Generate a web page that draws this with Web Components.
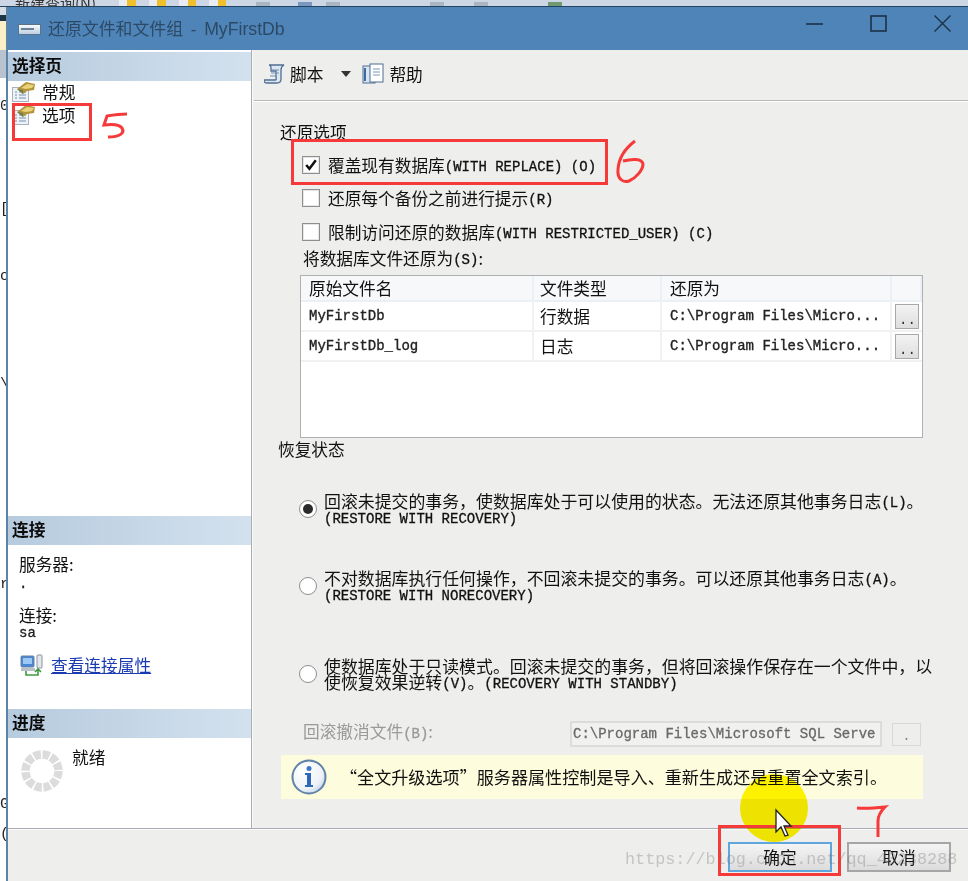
<!DOCTYPE html>
<html lang="zh">
<head>
<meta charset="utf-8">
<title>还原文件和文件组</title>
<style>
  html, body { margin: 0; padding: 0; background: #eeeeec; }
  body { font: 16.7px/20px "Noto Sans CJK SC", "Liberation Sans", sans-serif; color: #111; overflow: hidden; }
</style>
</head>
<body>

<restore-screen>
  <desk-top slot="top"></desk-top>
  <desk-edge slot="edge"></desk-edge>

  <title-bar slot="title">还原文件和文件组 - <span style="font-size:17.7px">MyFirstDb</span></title-bar>

  <side-pane slot="side">
    <side-section heading="选择页" size="464">
      <page-link>常规</page-link>
      <page-link>选项</page-link>
    </side-section>
    <side-section heading="连接" size="193">
      <conn-info></conn-info>
    </side-section>
    <side-section heading="进度" size="118">
      <progress-info></progress-info>
    </side-section>
  </side-pane>

  <tool-strip slot="tools"></tool-strip>

  <options-page slot="main">
    <form-label style="margin-top:21px">还原选项</form-label>

    <check-row checked style="margin-top:11px">覆盖现有数据库<mono-text>(WITH REPLACE) (O)</mono-text></check-row>
    <check-row style="margin-top:9px">还原每个备份之前进行提示<mono-text>(R)</mono-text></check-row>
    <check-row style="margin-top:10px">限制访问还原的数据库<mono-text>(WITH RESTRICTED_USER) (C)</mono-text></check-row>

    <form-label indent="48" style="margin-top:4px">将数据库文件还原为<mono-text>(S)</mono-text>:</form-label>
    <file-grid style="margin-top:7px"></file-grid>

    <form-label style="margin-top:1px;margin-left:-2px">恢复状态</form-label>

    <radio-row checked style="margin-top:33px">回滚未提交的事务&#xFF0C;使数据库处于可以使用的状态。无法还原其他事务日志<mono-text>(L)</mono-text>。<br><mono-text>(RESTORE WITH RECOVERY)</mono-text></radio-row>
    <radio-row style="margin-top:43px">不对数据库执行任何操作&#xFF0C;不回滚未提交的事务。可以还原其他事务日志<mono-text>(A)</mono-text>。<br><mono-text>(RESTORE WITH NORECOVERY)</mono-text></radio-row>
    <radio-row style="margin-top:54px">使数据库处于只读模式。回滚未提交的事务&#xFF0C;但将回滚操作保存在一个文件中&#xFF0C;以<br>使恢复效果逆转<mono-text>(V)</mono-text>。<mono-text>(RECOVERY WITH STANDBY)</mono-text></radio-row>

    <undo-row style="margin-top:30px"></undo-row>
    <info-bar style="margin-top:8px"><wide-quote>“</wide-quote>全文升级选项<wide-quote left>”</wide-quote>服务器属性控制是导入、重新生成还是重置全文索引。</info-bar>
  </options-page>

  <dialog-footer slot="footer">
    <dlg-button primary>确定</dlg-button>
    <dlg-button>取消</dlg-button>
  </dialog-footer>

  <mark-up slot="overlay"></mark-up>
</restore-screen>

<script>
// small helper so every component is declared the same way
function shadow(el, html) {
  el.attachShadow({ mode: 'open' });
  el.shadowRoot.innerHTML = html;
}

class MonoText extends HTMLElement {
  constructor() {
    super();
    // line-height 0 so the narrower font never pushes the two-line labels apart
    shadow(this, `<style>:host{font-family:"Liberation Mono",monospace;font-size:14px;line-height:0;vertical-align:1px;-webkit-text-stroke:.3px currentColor;}</style><slot></slot>`);
  }
}

// the dialog font sets quotes on a full em
class WideQuote extends HTMLElement {
  constructor() {
    super();
    shadow(this, `<style>:host{display:inline-block;width:1em;text-align:right;}:host([left]){text-align:left;}</style><slot></slot>`);
  }
}

class RestoreScreen extends HTMLElement {
  constructor() {
    super();
    shadow(this, `
      <style>
        :host { display: block; position: relative; width: 968px; height: 881px; overflow: hidden; }
        .lower { display: flex; height: 874px; }
        .dialog { flex: 1; display: flex; flex-direction: column; min-width: 0; border-left: 2px solid #5c83a8; background: #eeeeec; }
        .body { display: flex; height: 778px; }
        .right { flex: 1; display: flex; flex-direction: column; min-width: 0; }
      </style>
      <slot name="top"></slot>
      <div class="lower">
        <slot name="edge"></slot>
        <div class="dialog">
          <slot name="title"></slot>
          <div class="body">
            <slot name="side"></slot>
            <div class="right">
              <slot name="tools"></slot>
              <slot name="main"></slot>
            </div>
          </div>
          <slot name="footer"></slot>
        </div>
      </div>
      <slot name="overlay"></slot>`);
  }
}

// cropped bit of the SSMS toolbar behind the dialog
class DeskTop extends HTMLElement {
  constructor() {
    super();
    const yellow = x => `<i class="ico" style="margin-left:${x}px"></i>`;
    shadow(this, `
      <style>
        :host { display: block; height: 7px; overflow: hidden; background: #cdd6e4; }
        .row { display: flex; align-items: flex-end; height: 6px; border-bottom: 1px solid #23435f; }
        .txt { margin-left: 15px; color: #333; font-size: 15px; line-height: 18px; height: 6px; margin-top: -12px; display: block; transform: translateY(-6px); width: 90px; white-space: nowrap; }
        .ico { display: block; width: 17px; height: 6px; background: linear-gradient(90deg, #e9edf3 50%, #f0bf2c 50%); }
        .grey { display: block; width: 14px; height: 4px; background: #aab5c4; }
      </style>
      <div class="row">
        <span class="txt">新建查询(N)</span>
        ${yellow(14)}${yellow(13)}${yellow(13)}${yellow(13)}
        <i class="grey" style="margin-left:30px"></i>
        <i class="grey" style="margin-left:28px;background:#7b97bd"></i>
        <i class="grey" style="margin-left:14px"></i>
        <i class="grey" style="margin-left:90px"></i>
        <i class="grey" style="margin-left:30px"></i>
        <i class="grey" style="margin-left:60px;background:#6f9a6f"></i>
      </div>`);
  }
}

class DeskEdge extends HTMLElement {
  constructor() {
    super();
    const bits = [[92, '0'], [87, '['], [51, 'o'], [92, '\\'], [184, 'r'], [204, 'G'], [14, '(']];
    shadow(this, `
      <style>
        :host { display: block; width: 6px; height: 874px; overflow: hidden; flex: none;
          background: linear-gradient(#d8dde5 0 8px, #1f3347 8px 14px, #fbefc8 14px 43px, #b9c3cf 43px 71px, #fff 71px); }
        span { display: block; font: 15px/16px "Liberation Mono", monospace; color: #222; width: 6px; }
      </style>
      ${bits.map(b => `<span style="margin-top:${b[0]}px">${b[1]}</span>`).join('')}`);
  }
}

class TitleBar extends HTMLElement {
  constructor() {
    super();
    shadow(this, `
      <style>
        :host { display: flex; align-items: center; height: 43px; flex: none; background: #4f84b8;
          color: #2c4a66; font: 16.9px/20px "Liberation Sans", "Noto Sans CJK SC", sans-serif; word-spacing: 3px; }
        .icon { margin: 2px 7px 0 10px; flex: none; }
        .text { flex: 1; margin-top: 2px; white-space: nowrap; }
        svg.win { flex: none; display: block; }
        .buttons { display: flex; margin-right: 17px; margin-bottom: 11px; gap: 47px; align-items: center; }
      </style>
      <svg class="icon" width="23" height="11" viewBox="0 0 23 11">
        <defs><linearGradient id="g" x1="0" y1="0" x2="0" y2="1"><stop offset="0" stop-color="#fbfdff"/><stop offset="1" stop-color="#b9cde0"/></linearGradient></defs>
        <rect x=".5" y=".5" width="22" height="10" fill="url(#g)" stroke="#5a7389"/>
        <rect x="3" y="4" width="13" height="2" fill="#6b8196"/>
      </svg>
      <span class="text"><slot></slot></span>
      <div class="buttons">
        <svg class="win" width="17" height="17" viewBox="0 0 17 17"><path d="M0 9h17" stroke="#1b3145" stroke-width="1.6"/></svg>
        <svg class="win" width="17" height="17" viewBox="0 0 17 17"><rect x="1" y="1" width="15" height="15" fill="none" stroke="#1b3145" stroke-width="1.6"/></svg>
        <svg class="win" width="17" height="17" viewBox="0 0 17 17"><path d="M.5.5l16 16M16.500.5l-16 16" stroke="#1b3145" stroke-width="1.4"/></svg>
      </div>`);
  }
}

class SidePane extends HTMLElement {
  constructor() {
    super();
    shadow(this, `
      <style>
        :host { display: flex; flex-direction: column; flex: none; width: 243px; height: 776px;
          background: #fff; border-right: 1px solid #a9adb1; padding-top: 2px; box-shadow: 1px 0 0 #fafafa; margin-right: 2px; background-clip: padding-box; }
      </style><slot></slot>`);
  }
}

class SideSection extends HTMLElement {
  constructor() {
    super();
    shadow(this, `
      <style>
        :host { display: block; overflow: hidden; flex: none; }
        .head { height: 29px; padding-left: 4px; box-sizing: border-box;
          background: linear-gradient(90deg, #b6cbde, #d3e1ee);
          font: 700 16.7px/26px "Noto Sans CJK SC", sans-serif; color: #0c0c0c; }
      </style>
      <div class="head"></div>
      <slot></slot>`);
  }
  connectedCallback() {
    this.shadowRoot.querySelector('.head').textContent = this.getAttribute('heading');
    this.style.height = this.getAttribute('size') + 'px';
  }
}

class PageLink extends HTMLElement {
  constructor() {
    super();
    shadow(this, `
      <style>
        :host { display: flex; align-items: center; height: 23px; padding-left: 4px; gap: 6px; }
        :host(:first-child) { margin-top: -1px; }
        span { line-height: 20px; }
      </style>
      <svg width="24" height="21" viewBox="0 0 24 21">
        <rect x=".5" y="6.500" width="16" height="14" fill="#eef2f7" stroke="#a9b3bd"/>
        <path d="M3 11h2M7 11h7M3 14h2M7 14h7M3 17h2M7 17h7" stroke="#6f8fb3" stroke-width="1.2"/>
        <path d="M5 8L14 1l9 2-1 6-7 1-4 3z" fill="#b3933a"/>
        <path d="M9 7l6-4 7 1-2 3-6 1z" fill="#e8d27a"/>
        <path d="M5 8l6 1 0 4z" fill="#6d7f52"/>
      </svg>
      <span><slot></slot></span>`);
  }
}

class ConnInfo extends HTMLElement {
  constructor() {
    super();
    shadow(this, `
      <style>
        :host { display: block; padding: 9px 0 0 11px; }
        .l { height: 20px; line-height: 20px; }
        .v { font: 14px/14px "Liberation Mono", monospace; height: 14px; color: #222; -webkit-text-stroke: .3px currentColor; }
        a { display: flex; align-items: center; gap: 7px; margin-top: 13px; margin-left: 1px; color: #1a3bb0; text-decoration: underline; line-height: 20px; height: 24px; }
      </style>
      <div class="l">服务器:</div>
      <div class="v" style="margin-top:3px">.</div>
      <div class="l" style="margin-top:14px">连接:</div>
      <div class="v" style="margin-top:1px">sa</div>
      <a>
        <svg width="24" height="22" viewBox="0 0 24 22">
          <rect x="1" y="2" width="13" height="11" rx="1" fill="#4a86d8" stroke="#6b7f9c"/>
          <rect x="3" y="4" width="9" height="6" fill="#9cc8f4"/>
          <rect x="1" y="14" width="14" height="3" fill="#b9c0c8"/>
          <rect x="17" y="1" width="5" height="13" rx="1" fill="#e4e8ec" stroke="#8a949e"/>
          <path d="M6 17v4h12v-5M15 18l3-3 3 3" fill="none" stroke="#3f9a3f" stroke-width="1.600"/>
        </svg>
        <span>查看连接属性</span>
      </a>`);
  }
}

class ProgressInfo extends HTMLElement {
  constructor() {
    super();
    shadow(this, `
      <style>
        :host { display: flex; padding: 9px 0 0 13px; gap: 9px; }
        span { line-height: 20px; }
        svg { flex: none; margin-top: 3px; }
      </style>
      <svg width="42" height="42" viewBox="0 0 42 42">
        <circle cx="21" cy="21" r="16.500" fill="none" stroke="#dcdcdc" stroke-width="8.500" stroke-dasharray="7 1.640"/>
      </svg>
      <span>就绪</span>`);
  }
}

class ToolStrip extends HTMLElement {
  constructor() {
    super();
    shadow(this, `
      <style>
        :host { display: flex; align-items: center; flex: none; height: 51px; box-sizing: border-box; padding: 0 0 3px 10px;
          border-bottom: 1px solid #b9b9b9; box-shadow: 0 1px 0 #fff; }
        span { margin-left: 4px; line-height: 20px; }
        span.help { margin-left: 5px; }
        .arrow { width: 0; height: 0; margin: 0 11px 0 18px; border: 5px solid transparent; border-top: 6px solid #333; border-bottom: 0; }
      </style>
      <svg width="22" height="22" viewBox="0 0 22 22">
        <path d="M5 2h15c-2 1-3 3-3 5v9c0 3-2 4-4 4H3c-2 0-3-1-3-3h11c2 0 1-2 1-3V8H7V5c0-2-1-3-2-3z" fill="#dde7f2" stroke="#4f6f92" stroke-width="1.300"/>
        <path d="M7 7h8M7 10h8M6 13h7" stroke="#6f8fb3"/>
      </svg>
      <span>脚本</span>
      <i class="arrow"></i>
      <svg width="22" height="22" viewBox="0 0 22 22">
        <rect x="1" y="3" width="12" height="17" fill="#d8e4f2" stroke="#4f6f92"/>
        <rect x="8" y="1" width="13" height="18" fill="#fff" stroke="#4f6f92"/>
        <path d="M11 6h7M11 9h7M11 12h7" stroke="#7d9abb"/>
        <path d="M3 5v13" stroke="#3c6ba0" stroke-width="2"/>
      </svg>
      <span class="help">帮助</span>`);
  }
}

class OptionsPage extends HTMLElement {
  constructor() {
    super();
    shadow(this, `
      <style>
        :host { display: flex; flex-direction: column; flex: 1; min-height: 0; padding-left: 26px; padding-right: 45px; }
      </style><slot></slot>`);
  }
}

class FormLabel extends HTMLElement {
  constructor() {
    super();
    shadow(this, `
      <style>
        :host { display: block; height: 20px; line-height: 20px; white-space: nowrap; flex: none; }
        :host([indent]) { margin-left: 23px; }
      </style><slot></slot>`);
  }
}

class CheckRow extends HTMLElement {
  constructor() {
    super();
    shadow(this, `
      <style>
        :host { display: flex; align-items: center; flex: none; height: 24px; margin-left: 22px; gap: 8px; white-space: nowrap; }
        .box { flex: none; width: 18px; height: 18px; box-sizing: border-box; border: 1px solid #8e8f8f; background: #fff; box-shadow: inset 0 0 0 1px #e6e6e6; }
        svg { display: none; width: 16px; height: 16px; }
        :host([checked]) svg { display: block; }
        span { line-height: 20px; }
      </style>
      <div class="box"><svg viewBox="0 0 15 15"><path d="M3 7.500l3 3.500 6-8" fill="none" stroke="#111" stroke-width="2.400"/></svg></div>
      <span><slot></slot></span>`);
  }
}

class RadioRow extends HTMLElement {
  constructor() {
    super();
    shadow(this, `
      <style>
        :host { display: flex; align-items: center; flex: none; height: 34px; margin-left: 19px; gap: 7px; white-space: nowrap; font-size: 16.9px; }
        .dot { flex: none; width: 18px; height: 18px; box-sizing: border-box; border-radius: 50%; border: 1.500px solid #8e8f8f; background: #fff; display: grid; place-items: center; }
        .dot i { display: none; width: 10px; height: 10px; border-radius: 50%; background: #2b2b2b; }
        :host([checked]) .dot i { display: block; }
        span { line-height: 16px; }
      </style>
      <div class="dot"><i></i></div>
      <span><slot></slot></span>`);
  }
}

class FileGrid extends HTMLElement {
  constructor() {
    super();
    const rows = [
      ['MyFirstDb', '行数据', 'C:\\Program Files\\Micro...'],
      ['MyFirstDb_log', '日志', 'C:\\Program Files\\Micro...']
    ];
    shadow(this, `
      <style>
        :host { display: block; flex: none; margin-left: 20px; width: 623px; height: 163px; box-sizing: border-box; border: 1px solid #aeb0b2; background: #fff; }
        .row { display: grid; grid-template-columns: 233px 128px 230px 1fr; }
        .row > div { box-sizing: border-box; padding-left: 8px; border-right: 2px solid #f1f1f0; border-bottom: 2px solid #f1f1f0; white-space: nowrap; overflow: hidden; }
        .row > div:nth-child(2) { padding-left: 6px; }
        .head > div { height: 26px; line-height: 24px; background: #f7f8f9; border-color: #eaf0f5; }
        .item > div { height: 30px; line-height: 28px; }
        .item .m { font: 14px/28px "Liberation Mono", monospace; color: #222; -webkit-text-stroke: .35px currentColor; }
        .item .btn { padding: 2px 0 0 3px; border-right: 0; }
        button { display: block; width: 24px; height: 25px; padding: 0 0 0 3px; overflow: hidden; text-align: left; font: 14px/30px "Liberation Mono", monospace; color: #333; border: 1px solid #a8a8a8; background: linear-gradient(#f3f3f3, #dedede); white-space: nowrap; }
      </style>
      <div class="row head"><div>原始文件名</div><div>文件类型</div><div>还原为</div><div></div></div>
      ${rows.map(r => `
        <div class="row item">
          <div class="m">${r[0]}</div><div>${r[1]}</div><div class="m">${r[2]}</div>
          <div class="btn"><button>...</button></div>
        </div>`).join('')}`);
  }
}

class UndoRow extends HTMLElement {
  constructor() {
    super();
    shadow(this, `
      <style>
        :host { display: flex; align-items: center; flex: none; height: 26px; margin-left: 23px; color: #9a9a9a; white-space: nowrap; }
        .lab { width: 267px; flex: none; padding-bottom: 6px; }
        .mono { font: 14px "Liberation Mono", monospace; -webkit-text-stroke: .3px currentColor; }
        .inp { flex: none; width: 312px; height: 26px; box-sizing: border-box; border: 2px solid #dcdcdc; padding-left: 1px; overflow: hidden; color: #6a6a6a; background: #f1f1f0; font: 14px/22px "Liberation Mono", monospace; -webkit-text-stroke: .3px currentColor; }
        .btn { flex: none; width: 29px; height: 23px; margin-left: 10px; box-sizing: border-box; border: 1px solid #d8d8d8; text-align: center; color: #888; font: 14px/24px "Liberation Mono", monospace; }
      </style>
      <div class="lab">回滚撤消文件<span class="mono">(B)</span>:</div>
      <div class="inp">C:\\Program Files\\Microsoft SQL Serve</div>
      <div class="btn">.</div>`);
  }
}

class InfoBar extends HTMLElement {
  constructor() {
    super();
    shadow(this, `
      <style>
        :host { display: flex; align-items: center; flex: none; width: 642px; height: 44px; margin-left: 1px; background: #fdfcdc; white-space: nowrap; font-size: 17.1px; }
        svg { flex: none; margin: 0 13px 0 10px; }
        span { line-height: 20px; }
      </style>
      <svg width="36" height="36" viewBox="0 0 36 36">
        <defs><radialGradient id="ig" cx=".35" cy=".3" r=".8"><stop offset="0" stop-color="#fff"/><stop offset=".7" stop-color="#eef2f7"/><stop offset="1" stop-color="#bcd0e4"/></radialGradient></defs>
        <circle cx="18" cy="18" r="16.500" fill="url(#ig)" stroke="#5f83a8" stroke-width="2"/>
        <circle cx="18" cy="9.500" r="2.500" fill="#3d78c8"/>
        <path d="M14 14h6v12h2v2h-8v-2h2V16h-2z" fill="#2f68b8"/>
      </svg>
      <span><slot></slot></span>`);
  }
}

class DialogFooter extends HTMLElement {
  constructor() {
    super();
    shadow(this, `
      <style>
        :host { display: flex; flex: 1; justify-content: flex-end; gap: 15px; box-sizing: border-box; padding: 13px 17px 0 0; border-top: 1px solid #a9adb1; box-shadow: inset 0 1px 0 #fafafa; background: #eeeeec; }
      </style><slot></slot>`);
  }
}

class DlgButton extends HTMLElement {
  constructor() {
    super();
    shadow(this, `
      <style>
        :host { display: block; width: 104px; height: 30px; box-sizing: border-box; border: 2px solid #a6a6a6; text-align: center; line-height: 26px; background: linear-gradient(#f4f4f4, #dcdcdc); }
        :host([primary]) { border-color: #5ea6dc; }
      </style><slot></slot>`);
  }
}

// the red annotations, the cursor highlight and the blog watermark lie over the dialog
class MarkUp extends HTMLElement {
  constructor() {
    super();
    shadow(this, `
      <style>
        :host { position: absolute; inset: 0; pointer-events: none; display: block; }
        svg { position: absolute; inset: 0; }
        .spot { position: absolute; left: 740px; top: 774px; width: 68px; height: 68px; border-radius: 50%; background: #fff400; mix-blend-mode: multiply; }
        .wm { position: absolute; left: 625px; top: 849px; font: 16.8px/22px "Liberation Mono", monospace; color: rgba(110,110,110,.32); white-space: nowrap; }
      </style>
      <div class="spot"></div>
      <svg width="968" height="881" viewBox="0 0 968 881" fill="none" stroke="#f63a3a">
        <rect x="13.500" y="104.500" width="77" height="35" stroke-width="3"/>
        <rect x="292.500" y="140.500" width="314" height="43" stroke-width="3"/>
        <rect x="719.500" y="826.500" width="120" height="48" stroke-width="3"/>
        <path d="M127 114c-7 0-14 1-20 2-1 3-2 6-3 9 7-1 15-1 18 3 3 5-2 9-14 9" stroke-width="3"/>
        <path d="M635 141c-8 6-16 16-17 28-1 10 5 14 11 12 7-3 14-11 14-17-1-6-12-5-20-3" stroke-width="3"/>
        <path d="M857 808c9 1 19 0 28-1-3 3-7 8-7 14 0 5 0 11 0 16" stroke-width="3"/>
        <path d="M776 810v22l5-5 4 9 3-1-4-9h7z" fill="#fff" stroke="#222" stroke-width="1.300"/>
      </svg>
      <div class="wm">https://blog.csdn.net/qq_40238288</div>`);
  }
}

customElements.define('mono-text', MonoText);
customElements.define('wide-quote', WideQuote);
customElements.define('restore-screen', RestoreScreen);
customElements.define('desk-top', DeskTop);
customElements.define('desk-edge', DeskEdge);
customElements.define('title-bar', TitleBar);
customElements.define('side-pane', SidePane);
customElements.define('side-section', SideSection);
customElements.define('page-link', PageLink);
customElements.define('conn-info', ConnInfo);
customElements.define('progress-info', ProgressInfo);
customElements.define('tool-strip', ToolStrip);
customElements.define('options-page', OptionsPage);
customElements.define('form-label', FormLabel);
customElements.define('check-row', CheckRow);
customElements.define('radio-row', RadioRow);
customElements.define('file-grid', FileGrid);
customElements.define('undo-row', UndoRow);
customElements.define('info-bar', InfoBar);
customElements.define('dialog-footer', DialogFooter);
customElements.define('dlg-button', DlgButton);
customElements.define('mark-up', MarkUp);
</script>
</body>
</html>
